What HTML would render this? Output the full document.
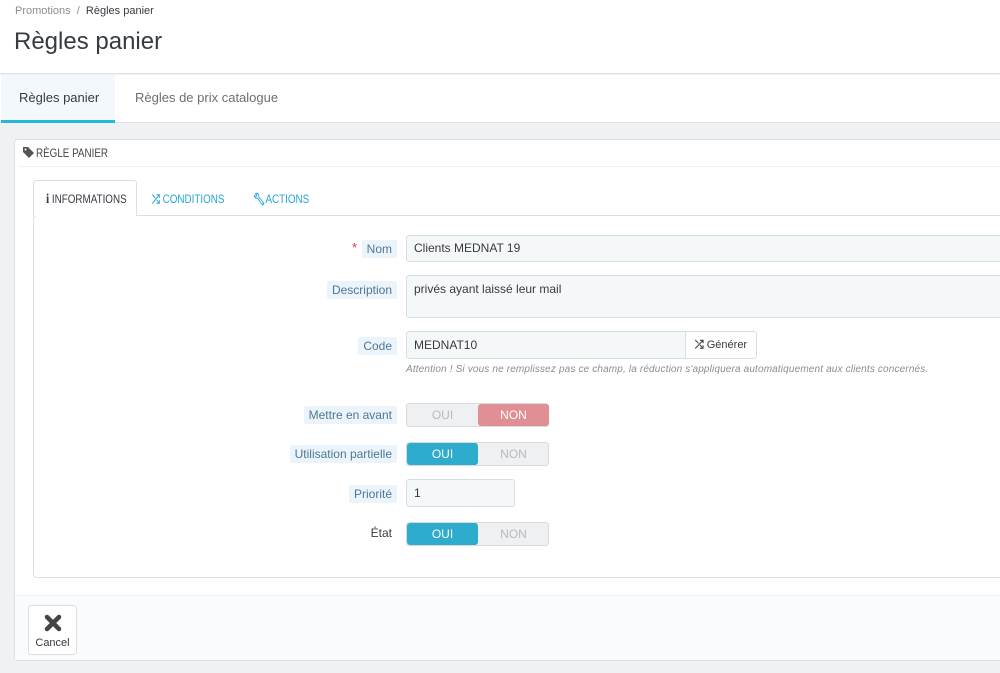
<!DOCTYPE html>
<html><head><meta charset="utf-8"><style>
*{box-sizing:border-box;margin:0;padding:0}
body{width:1000px;height:673px;overflow:hidden;background:#eff1f2;font-family:"Liberation Sans",sans-serif;position:relative;color:#363a41}
.a{position:absolute}
.narrow{transform:scaleX(0.82);transform-origin:0 0;white-space:nowrap}
.lbl{position:absolute;right:603px;height:18px;line-height:18px;padding:0 5px;background:#eaf4fa;color:#4f7894;font-size:12px;border-radius:2px}
.inp{position:absolute;background:#f5f8f9;border:1px solid #d5dfe3;border-radius:3px;font-size:12px;color:#363a41;padding:0 7px}
.sw{position:absolute;left:406px;width:143px;height:24px;border-radius:3px;background:#eef0f1;border:1px solid #d8dadc;font-size:12px}
.sw span{position:absolute;top:0;width:71px;height:22px;line-height:22px;text-align:center;color:#b8babc}
.sw .on{color:#fff;border-radius:3px}
</style></head><body>
<div class="a" style="left:0;top:0;width:1000px;height:74px;background:#fff;border-bottom:1px solid #dfe3e5"></div>
<div class="a" style="left:15px;top:5px;font-size:11px;color:#8a8d90">Promotions &nbsp;/&nbsp; <span style="color:#363a41">Règles panier</span></div>
<div class="a" style="left:14px;top:28px;font-size:24px;color:#363a41">Règles panier</div>
<div class="a" style="left:0;top:75px;width:1000px;height:48px;background:#fff;border-bottom:1px solid #dfe3e5"></div>
<div class="a" style="left:1px;top:75px;width:114px;height:48px;background:#f2f8fb;border-bottom:3px solid #25b9d7"></div>
<div class="a" style="left:19px;top:90px;font-size:13px;color:#363a41">Règles panier</div>
<div class="a" style="left:135px;top:90px;font-size:13px;color:#6c6f72">Règles de prix catalogue</div>

<div class="a" style="left:14px;top:139px;width:990px;height:522px;background:#fff;border:1px solid #dcdfe1;border-radius:4px"></div>
<div class="a" style="left:18px;top:166px;width:982px;height:1px;background:#eef0f1"></div>
<svg class="a" style="left:23px;top:147px" width="11" height="11" viewBox="0 0 11 11"><path d="M0 0H5L11 6L6 11L0 5Z" fill="#555"/><circle cx="2.5" cy="2.5" r="1" fill="#fff"/></svg>
<div class="a narrow" style="left:36px;top:146px;font-size:12px;color:#444">RÈGLE PANIER</div>

<div class="a" style="left:33px;top:215px;width:970px;height:363px;border:1px solid #dcdfe1;border-radius:4px;background:#fff"></div>
<div class="a" style="left:33px;top:180px;width:104px;height:36px;background:#fff;border:1px solid #dcdfe1;border-bottom:none;border-radius:3px 3px 0 0"></div>
<div class="a narrow" style="left:46px;top:192px;font-size:12px;color:#363a41"><b style="font-family:'Liberation Serif',serif;font-size:14px">i</b> INFORMATIONS</div>
<div class="a narrow" style="left:152px;top:192px;font-size:12px;color:#25a5d7"><b>⤮</b> CONDITIONS</div>
<div class="a narrow" style="left:253px;top:192px;font-size:12px;color:#25a5d7"><b>🔧︎</b>ACTIONS</div>

<div class="a" style="left:352px;top:240px;color:#e33;font-size:13px">*</div>
<div class="lbl" style="top:240px">Nom</div>
<div class="inp" style="left:406px;top:235px;width:600px;height:27px;line-height:25px">Clients MEDNAT 19</div>
<div class="lbl" style="top:281px">Description</div>
<div class="inp" style="left:406px;top:275px;width:600px;height:43px;padding-top:6px">privés ayant laissé leur mail</div>
<div class="lbl" style="top:337px">Code</div>
<div class="inp" style="left:406px;top:331px;width:280px;height:28px;line-height:26px;border-radius:3px 0 0 3px">MEDNAT10</div>
<div class="a" style="left:685px;top:331px;width:72px;height:28px;line-height:26px;background:#fff;border:1px solid #d5dfe3;border-radius:0 3px 3px 0;font-size:11px;color:#363a41;text-align:center"><b>⤮</b> Générer</div>
<div class="a" style="left:406px;top:364px;font-size:10px;font-style:italic;color:#8a8d90;letter-spacing:0.15px">Attention ! Si vous ne remplissez pas ce champ, la réduction s'appliquera automatiquement aux clients concernés.</div>

<div class="lbl" style="top:406px">Mettre en avant</div>
<div class="sw" style="top:403px"><span style="left:0">OUI</span><span class="on" style="left:71px;background:#e08f95">NON</span></div>
<div class="lbl" style="top:445px">Utilisation partielle</div>
<div class="sw" style="top:442px"><span class="on" style="left:0;background:#2eacce">OUI</span><span style="left:71px">NON</span></div>
<div class="lbl" style="top:485px">Priorité</div>
<div class="inp" style="left:406px;top:479px;width:109px;height:28px;line-height:26px">1</div>
<div class="a" style="right:603px;top:526px;font-size:12px;color:#363a41;padding:0 5px">État</div>
<div class="sw" style="top:522px"><span class="on" style="left:0;background:#2eacce">OUI</span><span style="left:71px">NON</span></div>

<div class="a" style="left:15px;top:595px;width:988px;height:65px;background:#fafbfc;border-top:1px solid #eef0f1"></div>
<div class="a" style="left:28px;top:605px;width:49px;height:50px;background:#fff;border:1px solid #dcdfe1;border-radius:3px"></div>
<svg class="a" style="left:44px;top:614px" width="18" height="18" viewBox="0 0 18 18"><path d="M3 3L15 15M15 3L3 15" stroke="#444" stroke-width="4.5" stroke-linecap="round"/></svg>
<div class="a" style="left:28px;top:637px;width:49px;text-align:center;font-size:11px;color:#363a41">Cancel</div>
</body></html>
